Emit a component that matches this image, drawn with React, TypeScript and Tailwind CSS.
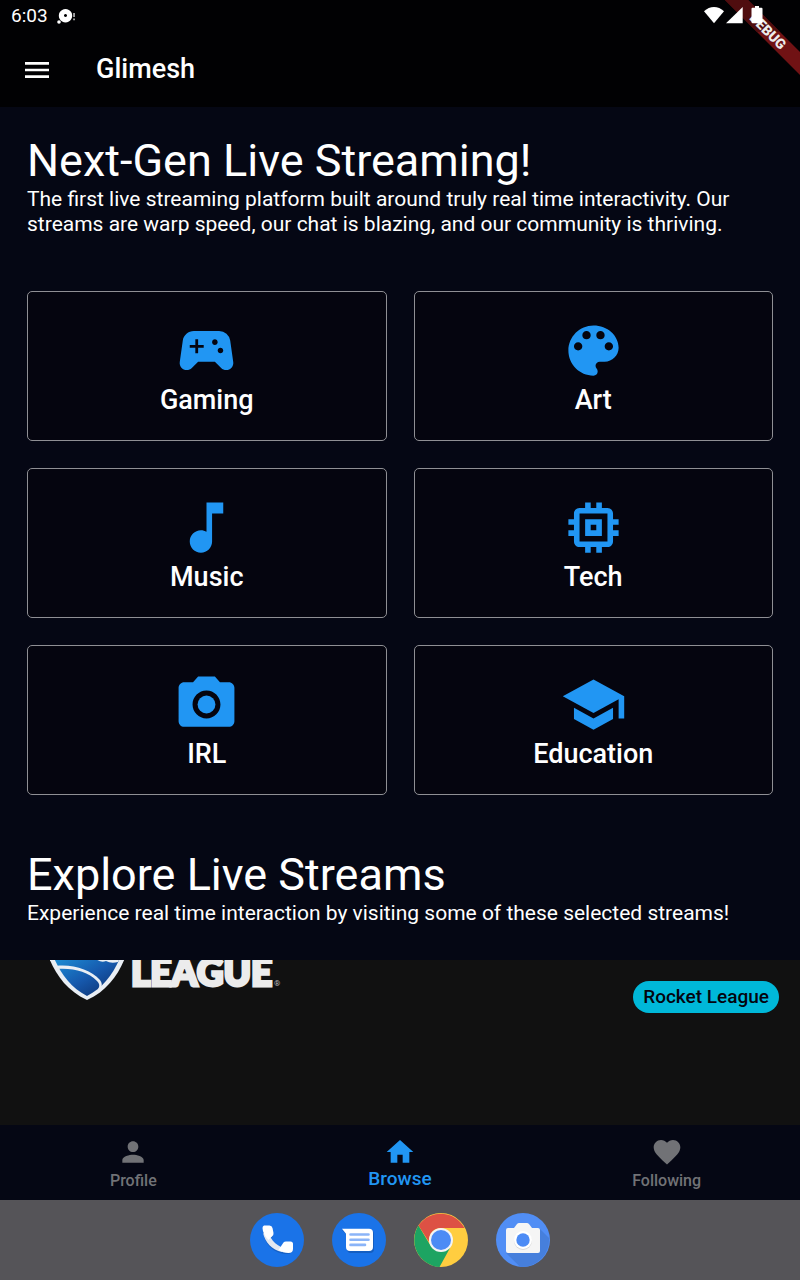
import type { ReactNode } from "react";
import type { IconType } from "react-icons";
import {
  MdCameraAlt,
  MdFavorite,
  MdHome,
  MdMemory,
  MdMenu,
  MdMusicNote,
  MdPerson,
  MdSchool,
  MdSportsEsports,
} from "react-icons/md";

function PaletteIcon({ className }: { className?: string }) {
  return (
    <svg className={className} viewBox="0 0 24 24" fill="currentColor" aria-hidden="true">
      <path d="M12 3c-4.970 0-9 4.030-9 9s4.030 9 9 9c.83 0 1.500-.67 1.500-1.500 0-.39-.15-.74-.39-1.010-.23-.26-.38-.61-.38-.99 0-.83.67-1.500 1.500-1.500H16c2.760 0 5-2.240 5-5 0-4.420-4.030-8-9-8zm-5.500 9c-.83 0-1.500-.67-1.500-1.500S5.670 9 6.500 9 8 9.670 8 10.500 7.330 12 6.500 12zm3-4C8.670 8 8 7.330 8 6.500S8.670 5 9.500 5s1.500.67 1.500 1.500S10.330 8 9.500 8zm5 0c-.83 0-1.500-.67-1.500-1.500S13.670 5 14.500 5s1.500.67 1.500 1.500S15.330 8 14.500 8zm3 4c-.83 0-1.500-.67-1.500-1.500S16.670 9 17.500 9s1.500.67 1.500 1.500-.67 1.500-1.500 1.500z" />
    </svg>
  );
}

const categories: { name: string; Icon: IconType | typeof PaletteIcon }[] = [
  { name: "Gaming", Icon: MdSportsEsports },
  { name: "Art", Icon: PaletteIcon },
  { name: "Music", Icon: MdMusicNote },
  { name: "Tech", Icon: MdMemory },
  { name: "IRL", Icon: MdCameraAlt },
  { name: "Education", Icon: MdSchool },
];

const tabs: { name: string; Icon: IconType; active: boolean }[] = [
  { name: "Profile", Icon: MdPerson, active: false },
  { name: "Browse", Icon: MdHome, active: true },
  { name: "Following", Icon: MdFavorite, active: false },
];

function StatusBar() {
  return (
    <div className="flex h-8 items-center justify-between pr-9 pl-[11px]">
      <div className="flex items-center gap-2">
        <span className="text-[19px] leading-8">6:03</span>
        <svg className="h-5 w-5" viewBox="0 0 20 20" fill="#fff" aria-hidden="true">
          <path
            fillRule="evenodd"
            d="M9.500 3a6.700 6.700 0 1 0 .01 0zM9.500 8a1.500 1.500 0 1 1-.01 0z"
          />
          <circle cx="3" cy="16" r="1.800" />
          <path d="M17.200 7h1.700v4h-1.700zM17.200 12.500h1.700v1.700h-1.700z" opacity=".7" />
        </svg>
      </div>
      <svg className="relative z-20 h-5 w-[60px]" viewBox="0 0 60 20" fill="#fff" aria-hidden="true">
        <path d="M10 17.300 0 5.300C5.800-.5 14.200-.5 20 5.300z" />
        <path d="M22 17.300 38.700 1v16.300z" />
        <path d="M51 0h4v1.700h2.500q1 0 1 1V16q0 1.300-1.300 1.300h-8.400q-1.300 0-1.300-1.300V2.700q0-1 1-1H51z" />
      </svg>
    </div>
  );
}

function DebugBanner() {
  return (
    <svg
      className="pointer-events-none absolute top-0 right-0 z-10 h-20 w-20"
      viewBox="0 0 80 80"
      aria-hidden="true"
    >
      <path d="M5 0h23l52 52v23z" fill="#701214" />
      <path d="M5 0h23l32 32H37z" fill="#4f0d0f" />
      <text
        x="48"
        y="36"
        transform="rotate(45 48 31)"
        textAnchor="middle"
        className="fill-[#ececec] font-['Roboto',sans-serif] text-[14px] font-black"
      >
        DEBUG
      </text>
    </svg>
  );
}

function Intro({ title, children }: { title: string; children: ReactNode }) {
  return (
    <div className="px-[27px]">
      <h2 className="text-[45px] leading-[53px]">{title}</h2>
      <p className="text-[21px] leading-[25px]">{children}</p>
    </div>
  );
}

function LeagueLogo() {
  return (
    <svg className="h-[50px] w-[240px]" viewBox="0 0 240 50" role="img" aria-label="Rocket League">
      <defs>
        <linearGradient id="shield" x1="0" y1="0" x2="1" y2="1">
          <stop offset="0" stopColor="#1c8fd6" />
          <stop offset=".5" stopColor="#1659ad" />
          <stop offset="1" stopColor="#0b2a66" />
        </linearGradient>
      </defs>
      <path d="M-1-2C6 15 17 31 37 40 57 31 68 15 75-2z" fill="#e9eef4" />
      <path d="M4-2C11 14 21 28 37 36 53 28 63 14 70-2z" fill="url(#shield)" />
      <path
        d="M6 6C23 4 41 10 50 20q3 4 1 8l-3 1q3-4-1-8C38 12 24 8 8 9z"
        fill="#e9eef4"
      />
      <path d="M46-1q5 4 10 2 5 3 12 1l2-4H46z" fill="#e9eef4" />
      <text
        x="81"
        y="26"
        className="fill-[#ececec] stroke-[#ececec] stroke-3 font-['Lato',sans-serif] text-[37px] font-black"
      >
        LEAGUE
      </text>
      <text x="224" y="26" className="fill-[#bbbbbb] font-['Roboto',sans-serif] text-[8px]">
        ®
      </text>
    </svg>
  );
}

function PhoneIcon() {
  return (
    <svg className="size-[54px]" viewBox="0 0 54 54" aria-hidden="true">
      <circle cx="27" cy="27" r="27" fill="#1a73e8" />
      <path
        d="M14 14h6l3 9-4 6q4 6 10 9l14-6v4q-1 5-6 5C24 41 14 31 13 18z"
        fill="#0d3f88"
        opacity=".35"
      />
      <path d="M13 20c2 9 9 17 19 19l-1-5c-4-2-8-5-10-9z" fill="#e4e8f0" />
      <path
        d="M14 12.500h5.500q2.500 0 3 2.500l1 5q.3 2-1.500 3.500L18.500 27C14.500 23 12.700 19 12.500 15q0-2 1.500-2.500z"
        fill="#fff"
      />
      <path
        d="M33.500 29.500q.8-1 2.500-1h4.500q2.500 0 2.500 2.500v5q0 4-4.500 4c-4 0-7-1-10-3z"
        fill="#fff"
      />
    </svg>
  );
}

function MessagesIcon() {
  return (
    <svg className="size-[54px]" viewBox="0 0 54 54" aria-hidden="true">
      <circle cx="27" cy="27" r="27" fill="#1a73e8" />
      <path d="m10 17 5 5v14q0 4 4 4h19q4 0 4-4V21q0-4-4-4z" fill="#0d3f88" opacity=".4" />
      <path d="m10 15.700 4 5V34q0 4 4 4h19q4 0 4-4V19.700q0-4-4-4z" fill="#fff" />
      <path
        d="M18.500 21.500h18M18.500 26.700h18M18.500 31.900h14.500"
        stroke="#8ab4f8"
        strokeWidth="2.600"
        strokeLinecap="round"
      />
    </svg>
  );
}

function ChromeIcon() {
  return (
    <svg className="size-[54px]" viewBox="0 0 54 54" aria-hidden="true">
      <circle cx="27" cy="27" r="27" fill="#ffcd40" />
      <path d="M4.500 12.500A27 27 0 0 0 25.500 54L36 35 15.500 31z" fill="#1da462" />
      <path d="M4.500 12.500A27 27 0 0 1 50.500 15H27A12 12 0 0 0 15 29z" fill="#dd5144" />
      <circle cx="27" cy="27" r="12" fill="#f4f4f4" />
      <circle cx="27" cy="27" r="10" fill="#4c8bf5" />
    </svg>
  );
}

function CameraIcon() {
  return (
    <svg className="size-[54px]" viewBox="0 0 54 54" aria-hidden="true">
      <circle cx="27" cy="27" r="27" fill="#518ef5" />
      <path d="M43 15 53 25A27 27 0 0 1 24 53.800L10 40z" fill="#467fdc" />
      <path
        d="M12 15h6l3-4q1-1 2-1h8q1 0 2 1l3 4h6q2 0 2 2v21q0 2-2 2H12q-2 0-2-2V17q0-2 2-2z"
        fill="#f5f5f5"
      />
      <circle cx="27" cy="28" r="9" fill="#d9d9d9" />
      <circle cx="27" cy="27" r="9" fill="#fff" />
      <circle cx="27" cy="27" r="6.700" fill="#4c8bf5" />
    </svg>
  );
}

const dock = [
  { name: "Phone", Icon: PhoneIcon },
  { name: "Messages", Icon: MessagesIcon },
  { name: "Chrome", Icon: ChromeIcon },
  { name: "Camera", Icon: CameraIcon },
];

export default function App() {
  return (
    <div className="relative flex min-h-screen flex-col overflow-hidden bg-[#050714] font-['Roboto',sans-serif] text-white">
      <DebugBanner />
      <header className="bg-[#010103]">
        <StatusBar />
        <div className="flex h-[75px] items-center gap-[43px] pl-[21px]">
          <button type="button" aria-label="Open menu">
            <MdMenu className="size-8" />
          </button>
          <h1 className="text-[27px] leading-[33px] font-medium">Glimesh</h1>
        </div>
      </header>

      <main className="flex grow flex-col">
        <div className="pt-[27px]">
          <Intro title="Next-Gen Live Streaming!">
            The first live streaming platform built around truly real time interactivity. Our
            streams are warp speed, our chat is blazing, and our community is thriving.
          </Intro>
        </div>

        <div className="grid grid-cols-2 gap-[27px] px-[27px] pt-[54px] pb-[53px]">
          {categories.map(({ name, Icon }) => (
            <button
              key={name}
              type="button"
              className="flex h-[150px] flex-col items-center justify-center rounded-[5px] border border-[#8f8f94] bg-[#05050f] pt-[2px]"
            >
              <Icon className="size-[67px] text-[#2196f3]" />
              <span className="text-[27px] leading-[33px] font-medium">{name}</span>
            </button>
          ))}
        </div>

        <Intro title="Explore Live Streams">
          Experience real time interaction by visiting some of these selected streams!
        </Intro>

        <section className="mt-[34px] flex min-h-[165px] grow items-start justify-between bg-[#111111] pr-[21px] pl-[50px]">
          <LeagueLogo />
          <a
            href="#rocket-league"
            className="mt-[21px] rounded-full bg-[#00b8d9] px-[10px] text-[19px] leading-8 font-medium text-[#04040e]"
          >
            Rocket League
          </a>
        </section>
      </main>

      <nav className="grid h-[75px] grid-cols-3">
        {tabs.map(({ name, Icon, active }) => (
          <button
            key={name}
            type="button"
            className={
              active
                ? "flex flex-col items-center justify-center text-[19px] leading-[22px] font-medium text-[#2196f3]"
                : "flex flex-col items-center justify-center pt-[3px] text-[16px] leading-[25px] font-medium text-[#717276]"
            }
          >
            <Icon className="size-8" />
            {name}
          </button>
        ))}
      </nav>

      <footer className="flex h-20 items-center justify-center gap-7 bg-[#555458]">
        {dock.map(({ name, Icon }) => (
          <button key={name} type="button" aria-label={name}>
            <Icon />
          </button>
        ))}
      </footer>
    </div>
  );
}
